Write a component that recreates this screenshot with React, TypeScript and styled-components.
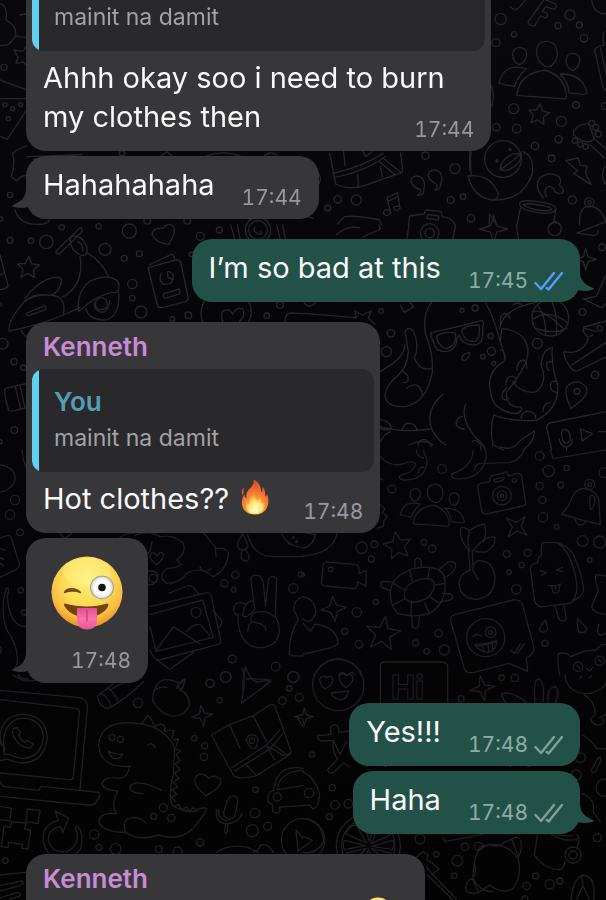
import React from 'react';
import styled, { createGlobalStyle, css } from 'styled-components';

const GlobalStyle = createGlobalStyle`
  * { box-sizing: border-box; }
  body {
    margin: 0;
    background: #050507;
    font-family: Inter, "Liberation Sans", sans-serif;
  }
`;

/* ---------- wallpaper ---------- */

type Tile = { x: number; y: number; dots: number[][]; paths: string[] };

const star = (cx: number, cy: number, outer: number, inner: number, points: number, turn = 0) => {
  const steps = Array.from({ length: points * 2 }, (_, i) => {
    const r = i % 2 ? inner : outer;
    const a = (Math.PI * i) / points - Math.PI / 2 + (turn * Math.PI) / 180;
    return `${(cx + r * Math.cos(a)).toFixed(1)} ${(cy + r * Math.sin(a)).toFixed(1)}`;
  });
  return `M${steps.join('L')}Z`;
};

const group = (dx: number, dy: number, s: number) => {
  const p = (x: number, y: number) => `${dx + x * s} ${dy + y * s}`;
  return [
    `M${p(0, 0)}Q${p(8, -62)} ${p(85, -72)}Q${p(148, -50)} ${p(148, 10)}Q${p(145, 16)} ${p(136, 14)}L${p(4, 5)}Q${p(-1, 4)} ${p(0, 0)}Z`,
    `M${p(88, -158)}C${p(130, -158)} ${p(128, -100)} ${p(104, -86)}Q${p(92, -78)} ${p(80, -86)}C${p(50, -105)} ${p(50, -158)} ${p(88, -158)}Z`,
    `M${p(8, -140)}C${p(42, -138)} ${p(30, -98)} ${p(8, -88)}C${p(-18, -94)} ${p(-22, -140)} ${p(8, -140)}Z`,
    `M${p(166, -122)}C${p(200, -122)} ${p(190, -80)} ${p(168, -70)}C${p(140, -80)} ${p(142, -122)} ${p(166, -122)}Z`,
    `M${p(28, -76)}Q${p(-40, -96)} ${p(-54, -32)}L${p(-8, -23)}Q${p(0, -50)} ${p(28, -76)}`,
    `M${p(130, -60)}Q${p(200, -60)} ${p(210, -2)}Q${p(208, 4)} ${p(156, -4)}Q${p(154, -34)} ${p(130, -60)}`,
  ];
};

const tiles: Tile[] = [
  {
    x: 0,
    y: 0,
    dots: [[12, 202, 9], [30, 585, 8], [2, 657, 6], [15, 314, 6], [38, 326, 6], [62, 314, 6], [25, 356, 6], [366, 460, 8], [562, 662, 10], [442, 662, 10]],
    paths: [
      'M0 10Q25 20 18 60Q55 80 45 110Q30 140 0 137M48 108L76 112M60 45L78 42',
      'M80 138L68 154L42 150L54 172L48 190L70 186L80 196',
      'M0 240L80 270M0 296H80M0 408L22 418L80 330',
      'M80 438L50 450L38 460Q46 490 34 530L50 542Q60 530 80 525M80 470L245 464L100 478',
      'M45 630Q60 680 130 672Q148 668 150 655M480 470L500 455L520 470M610 472Q670 445 730 472M790 470Q810 450 830 465',
    ],
  },
  {
    x: 303,
    y: 0,
    dots: [
      [593, 57, 17], [801, 45, 15], [765, 77, 9], [829, 75, 9], [633, 103, 8], [579, 128, 12], [843, 115, 11], [632, 326, 15], [819, 315, 10],
      [775, 364, 15], [641, 386, 13], [580, 382, 11], [696, 438, 11], [767, 418, 11], [746, 475, 10], [808, 600, 12], [480, 590, 8], [443, 600, 10],
      [160, 600, 15], [104, 598, 11], [74, 624, 9], [367, 467, 11], [456, 506, 15], [504, 655, 11], [905, 318, 10], [600, 477, 55], [582, 483, 3],
      [621, 448, 3], [859, 607, 14], [859, 607, 5], [866, 370, 9], [878, 382, 9], [886, 402, 9], [816, 422, 8], [832, 433, 8], [848, 440, 8],
    ],
    paths: [
      ...group(642, 282, 1),
      star(707, 344, 33, 16, 5, 8),
      'M622 20Q630 32 645 26L668 0M675 66L722 0M675 66Q680 82 696 76L712 48L728 54Q738 46 730 38L718 34L728 20L752 28Q764 22 758 12L728 0M866 0Q870 40 909 42',
      'M875 150Q880 138 909 134M875 150L900 262L909 272M892 142L909 220M903 95Q896 110 903 130',
      'M788 482L826 474L832 496L852 498L848 520L864 554L812 520L824 512Z',
      'M905 500Q890 530 909 554M812 392Q832 368 858 372L874 418Q850 438 812 405ZM875 418L909 446M862 434L904 474',
      'M504 455Q500 500 506 528M495 528Q560 520 586 580Q586 600 566 600Q510 590 495 528M566 600Q660 605 688 520Q695 470 660 455',
      'M592 510Q590 480 630 462L655 460Q656 495 610 512ZM594 508Q620 490 653 462',
      'M722 594Q690 560 712 532Q745 512 768 530Q778 545 768 555Q790 570 776 580Q755 582 752 566Q740 552 728 566Q722 580 732 590',
      'M362 568Q366 586 344 586Q364 570 340 564Q318 550 326 534Q346 520 360 538Q368 555 362 568M414 550Q414 570 396 570Q412 556 390 546Q370 532 378 516Q398 502 412 518Q420 535 414 550',
      'M244 632Q258 624 264 638Q256 650 246 645Q238 640 244 632M262 638L252 592L284 578L290 620M254 604L286 590M272 622Q288 614 292 624Q284 636 274 630Z',
      'M80 460L98 552Q130 570 180 558L296 518Q302 510 292 460M90 520Q180 500 240 460M96 532Q190 512 246 470M228 484L276 524M240 474L292 516M122 455L126 496M164 525L166 556M232 500L238 530M180 455L188 470L206 456',
      'M650 612Q650 598 700 604Q760 612 760 626Q755 645 706 638Q650 630 650 612ZM660 614Q680 606 740 622Q750 628 740 632Q690 634 660 614M652 625L642 675M758 632L752 668M740 675Q760 655 772 675',
      'M830 675Q826 620 858 618Q895 620 909 668M104 672L124 650Q160 645 230 660L236 675M316 675L320 648L364 642L368 630L414 634L418 650Q450 655 456 675M374 644L408 648L406 660L372 655ZM560 642L558 675M560 642L580 675',
      'M0 648Q18 650 32 655M40 516Q62 530 44 558M565 255Q576 290 566 320M500 450V510',
    ],
  },
  {
    x: 0,
    y: 225,
    dots: [
      [30, 46, 9], [93, 47, 8], [139, 51, 20], [185, 7, 8], [315, 73, 18], [388, 18, 21], [296, 4, 8], [373, 100, 9], [418, 86, 9], [601, 34, 12],
      [658, 15, 9], [574, 88, 7], [397, 177, 14], [397, 219, 8], [423, 261, 18], [517, 282, 7], [565, 271, 10], [840, 240, 10], [800, 272, 8],
      [8, 356, 16], [42, 410, 9], [70, 428, 8], [43, 615, 10], [304, 236, 18], [774, 15, 38], [774, 15, 28], [0, 238, 5], [0, 650, 6],
    ],
    paths: [
      star(85, 129, 35, 16, 5, 3),
      'M168 78Q166 88 178 87L246 20Q248 8 240 8L168 78M210 46Q212 28 232 34Q260 44 262 78Q258 96 242 90Q212 76 210 46ZM234 50Q250 60 248 78',
      'M262 84Q306 110 326 156M240 94Q254 180 188 216M76 220Q104 180 140 164Q190 146 184 174Q172 214 140 210Q100 204 76 228M28 318Q20 290 76 226Q120 202 172 214Q198 225 190 270Q120 300 28 318ZM80 264L134 242Q142 250 132 256L86 272Q78 272 80 264M190 270L240 248M236 260Q228 200 270 168Q320 146 350 166Q364 180 352 202Q300 200 236 260ZM256 250Q270 290 320 284Q360 270 356 205M282 232Q284 260 306 262Q326 258 330 226M64 316Q70 330 80 335',
      'M456 30Q458 6 488 10Q505 -10 520 4Q530 24 506 58Q470 55 456 30Z',
      'M444 128L472 240Q474 250 486 248L556 230Q566 226 564 216L542 112Q538 102 528 105ZM448 120L514 88Q522 88 526 105M484 144Q474 168 492 178Q522 180 520 152Q514 138 502 140M502 140L504 158L516 162M492 206L538 192Q544 206 534 208L494 220Q486 214 492 206Z',
      'M764 8Q758 22 778 28Q788 26 782 20M692 0L704 40M712 0L720 40M830 0L840 40M848 0L856 40',
      'M0 90L24 182Q20 192 0 194M0 152L14 142M16 490L78 476M16 490Q10 505 26 556Q30 562 78 548M46 484L62 552M60 482L74 545',
      'M612 230Q596 260 608 290M746 230Q762 260 746 290M668 290Q660 262 672 256Q690 250 698 268Q708 244 728 252Q738 270 718 290M856 290Q854 268 870 264L909 266',
    ],
  },
  {
    x: 303,
    y: 225,
    dots: [
      [380, 24, 28], [380, 24, 14], [755, 12, 20], [897, 67, 10], [838, 261, 10], [742, 278, 55], [703, 355, 15], [876, 450, 11], [822, 499, 9],
      [264, 325, 11], [250, 380, 15], [234, 258, 7], [516, 249, 9], [477, 256, 6], [563, 333, 8], [565, 379, 12], [540, 395, 7], [572, 415, 6], [20, 225, 18], [890, 310, 8],
    ],
    paths: [
      star(848, 103, 32, 10, 4), star(572, 12, 42, 13, 4),
      'M100 30Q130 0 170 8M180 36L232 12L228 0M312 40L318 0M450 40L458 0M640 0L646 40M822 24L909 -10M822 24L870 32Q885 30 886 18',
      'M842 222L880 214L909 150M842 222L895 248L909 235M0 265L160 278L156 258L178 270L204 258L196 280L216 298M292 240L304 262L332 246L322 234',
      'M388 230Q360 260 366 320Q392 390 388 440Q372 530 310 544Q250 550 246 512Q250 480 286 450Q312 430 316 380L306 320Q316 300 332 320Q350 360 334 400Q350 440 384 430M232 440L270 415Q304 390 306 360',
      'M384 334L384 322Q450 310 536 286Q544 292 540 304L538 340Q534 358 514 360Q476 360 468 330L462 340Q460 378 428 380Q396 380 392 352ZM400 334Q430 315 458 326Q460 368 426 370Q404 360 400 334ZM476 320Q480 300 528 300Q534 340 516 350Q486 352 476 320Z',
      'M476 400Q480 384 500 382Q500 400 486 406Q476 406 476 400M548 234Q570 270 592 350Q610 400 602 410Q550 440 562 500Q570 560 640 566Q660 560 654 546Q610 550 610 500Q640 470 670 410Q692 330 610 312L596 312L592 350M700 232Q600 250 590 310M628 470Q660 510 700 500Q736 470 714 420Q720 370 748 368Q744 420 764 480Q770 550 700 586Q620 590 572 570',
      'M300 440Q320 450 314 468Q308 475 300 472M310 490Q350 462 358 510M610 490Q595 500 598 520Q610 530 616 520M642 435Q642 410 660 405Q672 408 672 430M608 478Q610 450 634 455Q644 470 634 478M654 580Q656 556 680 560Q700 565 698 580M720 560Q720 535 742 532M762 502Q740 500 742 475Q750 465 758 470M738 436Q728 430 732 412L748 410M592 374Q608 380 606 404M592 294Q590 270 605 265Q620 268 620 280M630 240Q640 230 656 238',
      'M420 508Q360 560 390 620Q410 652 430 660M488 538Q470 580 520 640Q540 655 546 672M478 574Q458 578 460 600Q470 612 484 612M508 650Q520 640 534 660V675M572 570Q560 610 570 660L600 675M590 665Q630 680 650 648L694 618Q696 650 660 675M232 584Q260 586 266 612Q250 618 232 610M298 612Q304 590 326 596Q342 604 342 618M232 605Q300 625 382 612M232 650Q240 630 262 620M318 660Q360 640 390 660M346 660Q348 640 370 645Q384 652 384 665',
      'M690 282Q745 250 796 296M705 240Q730 280 728 330M745 225Q765 270 760 330M700 310Q750 330 792 310M690 260Q720 250 780 310',
      'M784 380Q780 392 800 424Q812 440 822 438L909 396M784 380Q840 390 856 340L840 318L843 306L909 288M806 420L909 352M858 334L870 330M843 310L880 320',
      'M804 550Q780 500 794 482Q822 458 848 484Q866 508 804 550Z',
      'M909 560L740 594Q728 600 732 612L746 675M776 622Q778 610 790 614Q800 618 802 640Q800 656 786 654Q776 650 776 622M768 640Q774 668 792 666Q808 660 808 644M791 667V675M832 612L868 626L838 648ZM888 620H909',
    ],
  },
  {
    x: 0,
    y: 450,
    dots: [
      [45, 150, 14], [30, 194, 14], [60, 247, 10], [62, 421, 8], [72, 487, 8], [460, 385, 12], [588, 487, 15], [673, 400, 11], [706, 375, 11],
      [701, 419, 7], [880, 415, 14], [902, 374, 8], [697, 627, 12], [677, 681, 16], [630, 700, 12], [827, 650, 13], [880, 681, 16], [867, 715, 8],
      [868, 280, 3], [890, 275, 3], [880, 262, 3],
    ],
    paths: [
      'M0 45Q46 50 46 90Q30 125 0 126M66 0L70 30L78 50M0 264L24 256Q34 256 36 270L58 340Q60 350 50 358L0 382M0 296L14 300M0 324L12 328M0 340L10 346',
      'M20 415Q30 408 22 440Q28 530 78 530M20 415Q-2 470 20 540Q50 580 52 620Q54 650 40 660M40 675Q70 700 110 690M0 590Q8 600 0 610',
      'M180 250Q190 268 200 262L214 250M350 275Q370 245 400 250M405 255Q450 240 480 260Q520 252 550 280Q560 310 530 330Q560 350 500 356Q470 380 500 400Q540 400 560 370Q600 345 640 380Q680 360 686 310Q680 290 650 296L610 248M646 296L648 320M635 355Q610 375 600 350M440 345Q430 310 450 305L456 276',
      'M450 318Q450 305 464 310L472 318Q480 300 490 312Q490 330 470 344Q450 330 450 318ZM430 365Q470 355 474 380Q470 408 440 404',
      'M728 250L712 280Q712 300 728 300Q750 295 742 280ZM728 298Q714 330 740 334Q756 320 738 302M742 252Q760 320 820 320H909M845 250Q860 290 909 292',
      'M450 470L620 428Q630 426 634 440L662 570Q664 582 652 584L478 630Q460 628 450 600M450 494L608 450L640 562L468 604L450 530M470 600L520 530L600 582M560 545Q580 520 600 524L630 556M506 430L560 408Q570 404 580 412L596 432M640 482L664 510Q670 520 656 534M470 630L510 658L580 608',
      'M764 476L752 386Q758 370 780 378L790 396L796 462M796 470L806 386Q816 374 830 386L826 500Q850 540 826 576Q790 604 750 586Q712 562 714 492M764 480L740 500Q726 502 728 490L736 466Q750 446 762 456M734 462Q712 450 702 470Q698 490 716 498M758 492Q750 500 754 514Q780 520 790 526Q800 530 796 540M754 514Q742 530 744 545M758 490Q800 476 822 500M909 440Q880 450 882 480L896 510Q870 540 868 610Q870 620 909 618',
      'M736 650Q728 690 728 720M736 650Q750 690 770 696L812 690L780 720M530 715Q540 690 556 688Q552 710 540 720M330 720Q360 700 400 690M464 720Q480 708 500 712',
    ],
  },
  {
    x: 303,
    y: 450,
    dots: [
      [710, 18, 13], [737, 63, 17], [791, 54, 8], [710, 108, 11], [773, 105, 9], [718, 150, 11], [720, 202, 14], [761, 231, 7], [417, 57, 13],
      [267, 117, 12], [597, 137, 28], [597, 137, 14], [597, 137, 5], [634, 91, 6], [176, 293, 17], [214, 283, 10], [205, 327, 9], [363, 277, 9],
      [388, 296, 11], [611, 312, 10], [674, 308, 11], [656, 345, 8], [618, 367, 7], [640, 418, 14], [839, 273, 16], [890, 276, 18], [860, 330, 7],
      [903, 68, 15], [83, 358, 7], [161, 487, 14], [218, 456, 8], [125, 544, 9], [168, 583, 11], [338, 579, 9], [371, 604, 8], [424, 600, 15],
      [407, 550, 11], [726, 580, 9], [548, 563, 57], [563, 547, 16], [563, 547, 6], [860, 103, 15], [860, 103, 6], [825, 650, 14], [890, 632, 14], [0, 374, 5],
    ],
    paths: [
      ...group(331, 218, 0.73),
      star(284, 288, 43, 20, 5, -10), star(240, 552, 54, 22, 5, 8), star(641, 230, 40, 13, 4, 40),
      star(92, 476, 38, 14, 4, -6),
      'M232 20Q260 52 300 42Q334 28 338 44Q330 70 292 76Q284 86 300 90Q370 92 372 30L360 0M340 0Q342 22 362 24M345 70Q346 50 362 52M510 0Q510 50 446 72Q440 90 480 86Q540 80 550 20L548 0M515 60Q515 40 535 40M540 40L620 38Q650 30 664 0M742 0L750 26L909 0M232 85L240 90',
      'M524 114Q522 104 532 100L560 94L564 78L612 66L616 78L644 70Q654 70 656 80L668 158Q668 166 660 168L550 192Q540 192 536 182ZM572 90Q588 82 604 84Q606 92 576 96Z',
      'M775 192Q796 176 808 140Q824 108 856 118Q890 130 888 160L892 224Q830 210 775 192ZM862 138Q874 130 876 150Q874 176 862 178Q858 160 862 138M816 208Q826 236 846 218',
      'M500 304Q468 270 472 236Q478 226 500 242Q520 226 544 222Q554 250 540 276Q556 256 576 262Q578 290 548 306Q520 308 512 300M500 244Q490 270 500 300M512 300Q530 280 540 270M496 300L502 360M508 300L510 362M502 360Q470 370 468 400Q472 446 522 448Q576 440 576 380Q568 330 526 332Q506 340 510 362L526 390',
      'M60 346Q64 334 76 336L160 344Q170 346 168 370L190 362L188 408L164 396Q162 414 156 416L64 408Q54 406 56 396Z',
      'M262 430Q262 380 330 356Q400 342 422 374Q440 450 384 488Q340 506 284 490Q262 470 262 430ZM304 440Q300 414 330 396Q376 376 392 394Q400 420 370 446Q320 470 304 440M270 400L304 420M320 360L328 396M380 354L374 386M424 400L392 406M410 460L380 440M364 458L380 490M325 460L324 496M268 466L306 446M336 356L336 330Q346 316 354 332L356 352M406 360L436 336Q460 330 458 350Q450 372 422 384M264 396L238 394Q226 402 240 414L262 422M418 430L442 432Q456 442 442 450L412 456M326 498L328 530Q340 540 346 528L350 498M442 346L446 352',
      'M718 278Q712 300 716 316Q702 320 704 338Q684 340 682 356L694 450Q700 472 720 470L800 460Q830 440 818 380Q800 300 762 278ZM762 278Q800 290 812 316Q840 380 842 420Q836 440 820 446M800 460L822 446M712 362L730 368L716 376M778 352L760 360L778 364M736 406Q756 410 774 402M746 410L750 426Q760 434 768 424L770 406M758 408V420M756 466L768 508Q780 520 790 506L782 462',
      'M728 510Q706 530 710 542Q724 552 734 538ZM824 506Q820 530 828 546Q846 552 852 536ZM888 522Q878 546 892 556L909 550M909 378L880 374Q872 382 886 420L866 470Q870 490 909 494',
      'M442 510Q442 498 456 494L630 450Q650 448 658 462L692 590Q696 610 670 624L674 664L618 640L510 668Q490 670 484 656ZM510 560Q516 548 536 558M516 584Q548 582 582 572Q580 600 556 608Q526 604 516 584M520 590L582 576M538 584L542 600M554 582L558 606M568 578L568 596M624 602L636 610L652 582M644 610L664 580',
      'M770 675Q760 620 768 610Q790 606 804 620Q840 600 880 600Q896 580 909 584M820 646L830 654M886 628L894 636M850 655L860 664L870 652',
      'M0 440Q40 450 38 490Q30 512 18 515Q0 512 0 505M0 520L22 545L36 522Q100 530 106 580Q100 592 0 612M34 675Q60 625 110 626Q160 635 174 675M108 675Q114 660 130 675M136 675Q146 660 156 675M232 675V650Q232 636 246 636H416Q432 636 434 650V675M0 248Q20 250 38 255M0 294Q30 290 38 250M0 318Q90 310 102 250M232 165L246 176L238 188L254 200L242 212V228L225 234',
    ],
  },
  {
    x: 0,
    y: 675,
    dots: [
      [414, 84, 14], [630, 25, 12], [677, 6, 16], [659, 76, 8], [583, 190, 8], [614, 212, 9], [612, 246, 11], [336, 187, 9], [361, 193, 9],
      [756, 197, 8], [766, 344, 8], [765, 414, 14], [757, 467, 18], [803, 454, 12], [283, 478, 14], [297, 517, 9], [347, 522, 16], [461, 424, 9],
      [490, 398, 12], [514, 429, 11], [600, 502, 11], [476, 522, 10], [533, 530, 14], [16, 557, 8], [832, 366, 12], [847, 77, 11], [898, 67, 12],
      [880, 6, 17], [868, 40, 8], [909, 495, 65],
    ],
    paths: [
      'M0 46L240 68Q264 74 262 100L240 344M0 74L228 100Q240 102 238 114L220 306Q218 316 206 314L0 294M0 320L10 334L116 346L124 334L296 352Q306 360 286 384Q280 392 262 390L0 364',
      'M0 210Q-8 130 60 118Q136 116 142 188Q134 262 66 264Q40 262 20 252L0 258M12 234Q6 190 20 160Q40 126 80 130Q130 140 130 190Q122 246 70 250Q44 248 30 238L12 238L14 218Q0 210 0 180M40 160Q34 176 44 190Q60 218 90 220L100 208L82 196L72 202Q60 192 56 180L62 172L50 158Z',
      'M292 64L360 10M292 64Q300 100 326 100Q380 70 430 20M302 54Q326 66 334 96M322 38Q346 54 354 80',
      'M540 44Q570 60 568 90Q556 122 520 124Q480 118 458 76Q460 20 496 14Q520 14 540 26L554 12Q552 40 540 44ZM532 30L540 44',
      star(607, 122, 32, 10, 4, -8),
      'M726 -20Q740 10 724 84L812 20Q810 10 740 12M884 125L909 118M890 125L909 155',
      'M634 180L700 300Q712 316 770 302L870 238Q876 230 870 220L826 96Q820 84 806 92L760 122L690 148ZM696 278L800 210L840 164M704 288L810 222L848 176M804 214L850 242L872 236M816 206L858 238M690 152L720 220M760 124L800 200M740 270L768 300M800 216L824 254M756 220Q730 196 746 182Q766 174 774 192Q774 208 766 220Z',
      'M390 274Q380 310 360 310Q310 304 306 326Q310 346 354 348Q330 390 350 416Q300 410 296 440Q310 472 376 472Q420 500 476 480Q540 500 580 460Q620 410 620 400Q600 396 584 410Q540 410 516 390Q504 360 520 300L524 220Q500 160 420 146Q300 130 296 210Q300 280 390 274ZM326 230Q346 240 368 238Q360 254 340 250Q328 242 326 230M444 210Q456 200 466 218M430 356Q390 356 390 334Q410 308 484 346M376 470Q364 430 400 428Q424 428 438 444M424 146L444 122Q458 130 462 156M466 156Q480 140 494 152V168M496 170Q510 164 522 166L516 190M520 195L536 192L528 214M524 220L542 228L528 240L540 256L526 268L540 284L524 294L536 310L520 322L534 336L516 344L530 358L514 366L526 380M524 394L536 388L544 404L560 396L568 408L580 398L590 408',
      'M584 314Q590 294 608 298Q620 300 626 310Q646 296 662 314Q668 334 618 362Q582 334 584 314Z',
      'M680 380Q690 358 706 364Q716 372 712 390L704 424Q694 438 680 430Q668 420 672 410ZM650 404Q644 444 680 446Q716 444 726 416M656 404Q652 430 680 438M684 448L680 474Q676 480 674 470L676 448',
      'M909 280Q850 270 830 310L820 346Q800 350 804 380L818 390V408Q828 420 840 408L838 396L909 392M832 344Q836 290 909 286M832 344L909 332M888 465L909 490M888 465L894 528L909 515',
      'M0 394L34 400L30 438L0 434M82 402L120 406L114 446L78 440ZM34 440L78 444L74 462L92 466L84 522L66 520L68 508L26 502L24 518L4 514L12 454L32 456Z',
      'M166 408L206 430L188 472L180 454Q140 464 146 500Q156 534 200 530Q240 510 230 470Q222 450 234 454Q254 480 242 520Q230 540 210 545M166 408L174 436Q124 450 130 500Q140 540 165 545',
      'M0 600L76 592M0 632L66 618Q74 626 60 632L0 648M0 668L52 652Q66 656 58 664L30 672M650 532Q680 510 724 514Q750 516 774 532M760 530Q776 530 780 512Q800 500 820 532M54 0Q66 14 86 12M90 0L100 10',
    ],
  },
  {
    x: 303,
    y: 675,
    dots: [
      [106, 30, 77], [474, 71, 9], [596, 8, 8], [635, 9, 11], [27, 239, 8], [88, 338, 9], [96, 390, 13], [136, 386, 13], [79, 425, 9], [18, 354, 14],
      [196, 512, 96], [196, 512, 80], [351, 492, 15], [400, 538, 8], [463, 557, 16], [486, 515, 11], [527, 514, 12], [454, 602, 8], [671, 633, 11],
      [698, 603, 9], [740, 628, 14], [771, 618, 9], [883, 488, 12], [810, 540, 24], [810, 540, 12], [905, 338, 26], [832, 248, 15], [820, 300, 15], [666, 672, 9],
    ],
    paths: [
      'M50 12Q56 -2 72 8Q84 -4 90 14Q90 30 66 42Q50 30 50 12ZM108 4Q116 -10 130 2Q144 -8 150 8Q150 24 128 38Q110 24 108 4ZM84 54L136 48Q134 72 112 74Q90 70 84 54',
      star(538, 40, 38, 12, 4, -10), star(4, 125, 26, 8, 4),
      'M232 0V85M434 0V85M596 58Q620 44 668 80L660 95H620Q600 75 596 58M696 82Q690 10 708 12Q726 20 720 80M736 82Q730 40 756 34Q774 50 756 84M786 0Q790 56 860 56Q909 40 909 20M830 10L836 4M860 8L866 2M842 58Q880 80 876 120Q850 134 880 150Q909 150 900 130M890 128L909 118M840 180Q870 200 880 220L909 222M884 250Q896 240 892 260L878 290Q864 296 866 284Z',
      'M0 290Q40 310 50 360Q46 400 30 402L18 390L0 392M0 430Q60 440 62 500Q40 540 0 532M0 484L28 496L0 518M190 275Q210 260 250 275M620 275Q640 260 680 275M836 355Q880 370 870 410L892 440',
      'M44 182Q50 178 58 182L84 178L82 158Q94 142 106 156L108 172L140 168M44 182Q44 196 56 198L90 196Q88 232 104 252L74 284Q78 300 92 292L122 264L140 276M90 196L112 238L130 200',
      'M190 504L128 476Q140 450 160 450ZM200 500L180 440Q195 435 216 440ZM204 506L230 450Q250 456 262 480ZM206 514L270 496Q276 510 268 524ZM188 512L124 496Q118 510 124 524ZM190 520L130 534Q140 552 150 560ZM204 520L264 534L250 555ZM196 522L185 560H208Z',
      'M360 530L342 545M360 530L376 540L370 555L386 562L394 570L408 582L388 598L370 575M372 600L450 675M388 598L460 672M424 500L540 478M420 486L426 500',
      'M524 530Q530 500 580 514L630 490Q650 480 654 500Q658 530 644 548Q660 600 630 640Q600 660 560 630L524 654Q486 660 488 636Q490 614 510 610Q510 560 524 530ZM524 530Q560 490 620 524Q640 540 644 550M510 610Q530 650 570 650M512 604Q520 600 516 570M626 494L646 544M508 612L526 650',
      'M704 476L694 540Q720 580 770 584Q784 580 786 560M740 475Q780 500 820 494Q832 488 822 478M752 475Q790 488 810 480M830 490L822 520M804 675Q810 610 840 600Q880 604 872 675M820 675Q826 660 840 632L860 675M836 604L840 632',
    ],
  },
];

const WallpaperSvg = styled.svg`
  position: fixed;
  inset: 0;
  width: 100%;
  height: 100%;
  z-index: 0;
`;

const Wallpaper = () => (
  <WallpaperSvg viewBox="0 0 606 900" preserveAspectRatio="xMidYMin slice" aria-hidden="true">
    <defs>
      <linearGradient id="night" x1="0" y1="0" x2="0" y2="1">
        <stop offset="0" stopColor="#09090c" />
        <stop offset="0.5" stopColor="#050507" />
        <stop offset="1" stopColor="#030304" />
      </linearGradient>
    </defs>
    <rect width="606" height="900" fill="url(#night)" />
    {tiles.map((tile) => (
      <g
        key={`${tile.x}-${tile.y}`}
        transform={`translate(${tile.x} ${tile.y}) scale(0.33333)`}
        fill="none"
        stroke={tile.y < 450 ? '#262629' : '#1f1f21'}
        strokeWidth="4"
        strokeLinejoin="round"
        strokeLinecap="round"
      >
        {tile.dots.map(([cx, cy, r], i) => (
          <circle key={i} cx={cx} cy={cy} r={r} />
        ))}
        {tile.paths.map((d, i) => (
          <path key={i} d={d} />
        ))}
      </g>
    ))}
    <text x="391" y="699" fontFamily="Inter" fontWeight="800" fontSize="32" fill="none" stroke="#1f1f21">
      Hi
    </text>
  </WallpaperSvg>
);

/* ---------- small drawings ---------- */

const Ticks = styled.svg<{ $read?: boolean }>`
  width: 29px;
  height: 20px;
  margin-left: 6px;
  fill: none;
  stroke: ${(p) => (p.$read ? '#559df5' : '#7fa096')};
  stroke-width: 2.4;
  stroke-linecap: round;
  stroke-linejoin: round;
`;

const ReadTicks = ({ read }: { read?: boolean }) => (
  <Ticks $read={read} viewBox="0 0 29 20" role="img" aria-label={read ? 'Read' : 'Delivered'}>
    <path d="M1.5 12L7 18L20 2M12.7 17L14.6 18.4L28 2" />
  </Ticks>
);

const FlameSvg = styled.svg`
  width: 30px;
  height: 36px;
  margin: 0 6px 0 3px;
  vertical-align: -6px;
`;

const Flame = () => (
  <FlameSvg viewBox="0 0 30 36" role="img" aria-label="fire">
    <defs>
      <radialGradient id="flameOuter" cx="0.5" cy="0.88" r="0.85">
        <stop offset="0" stopColor="#ffd95a" />
        <stop offset="0.35" stopColor="#fba03a" />
        <stop offset="0.75" stopColor="#ee6230" />
        <stop offset="1" stopColor="#dc4a2a" />
      </radialGradient>
      <radialGradient id="flameInner" cx="0.5" cy="0.8" r="0.7">
        <stop offset="0" stopColor="#fffbd0" />
        <stop offset="0.5" stopColor="#ffe777" />
        <stop offset="1" stopColor="#fba83c" stopOpacity="0.4" />
      </radialGradient>
    </defs>
    <path
      fill="url(#flameOuter)"
      d="M13.5 0.5C18 2.5 21.5 7 21.2 13.2C22.6 12.6 22.9 9.5 22.6 7.8C25.2 10 25.2 14.2 25.4 17.6C26.8 17.2 27 15.6 27 14.8C29.6 20 30 35.4 15 35.6C0.6 35.4-.2 22 4.4 15.6C4.8 17.6 5.4 18.8 6.6 19.2C5.4 13.4 8.6 10.8 11.4 7.8C13.6 5.4 14 3 13.5 0.5Z"
    />
    <path fill="#e45b31" d="M4.2 8C1.6 10.6 1.2 13.8 2.8 16.4C4.4 14 2.8 11.6 4.2 8Z" />
    <path
      fill="url(#flameInner)"
      d="M13.6 13C15.6 15.6 14.8 18.8 17.6 21.4C19.2 20.8 19.4 18.6 19.2 17.2C21.6 19.6 21 22.6 22.4 24.4C23.6 24 23.8 22.6 23.8 22C26 28 23 34.6 15 34.8C7 34.6 4.6 28.4 6.8 23C7.4 24.4 8 25 9 25C8.4 19.6 13.6 18 13.6 13Z"
    />
  </FlameSvg>
);

const FaceSvg = styled.svg<{ $inline?: boolean }>`
  display: block;
  width: ${(p) => (p.$inline ? '30px' : '72px')};
  height: ${(p) => (p.$inline ? '32px' : '76px')};
`;

const WinkFace = ({ id, inline }: { id: string; inline?: boolean }) => (
  <FaceSvg $inline={inline} viewBox="0 0 72 76" role="img" aria-label="winking face with tongue">
    <defs>
      <radialGradient id={`${id}Skin`} cx="0.5" cy="0.34" r="0.68">
        <stop offset="0" stopColor="#fff07a" />
        <stop offset="0.5" stopColor="#fddb57" />
        <stop offset="0.78" stopColor="#f9bc3f" />
        <stop offset="1" stopColor="#e58a22" />
      </radialGradient>
      <radialGradient id={`${id}Eye`}>
        <stop offset="0.65" stopColor="#ffffff" />
        <stop offset="0.88" stopColor="#d9dcdf" />
        <stop offset="1" stopColor="#868178" />
      </radialGradient>
      <linearGradient id={`${id}Tongue`} x1="0" y1="0" x2="0" y2="1">
        <stop offset="0" stopColor="#e0508c" />
        <stop offset="0.5" stopColor="#f973ab" />
        <stop offset="1" stopColor="#ea5794" />
      </linearGradient>
    </defs>
    <circle cx="36" cy="36" r="35.5" fill={`url(#${id}Skin)`} />
    <ellipse cx="36" cy="16" rx="24" ry="14" fill="#fff79c" opacity="0.35" />
    <path d="M13.5 36.5C15.5 31.5 25 31.5 29.5 36.5C24 34.6 18.5 34.6 13.5 36.5Z" fill="#7a4a12" stroke="#7a4a12" strokeWidth="1.4" strokeLinejoin="round" />
    <circle cx="51" cy="31.5" r="11.8" fill={`url(#${id}Eye)`} />
    <circle cx="51" cy="31.5" r="3.8" fill="#151414" />
    <path d="M13.8 47.6C28 51.5 44 51.5 56 47.6C57.6 47.6 57.6 49.4 56.8 51C48 65 22 65 13.4 50C12.8 48.6 13 47.6 13.8 47.6Z" fill="#754211" />
    <path d="M26 52H46V64C46 70 42.6 73.4 36 73.4C29.4 73.4 26 70 26 64Z" fill={`url(#${id}Tongue)`} />
    <path d="M36 54V65" stroke="#ce3f7c" strokeWidth="1.4" strokeLinecap="round" />
  </FaceSvg>
);

/* ---------- conversation ---------- */

const Chat = styled.main`
  position: relative;
  z-index: 1;
  height: 100vh;
  overflow: hidden;
  padding: 0 26px;
`;

const Thread = styled.ol`
  list-style: none;
  margin: 0;
  padding: 0;
  display: flex;
  flex-direction: column;
  gap: 20px;
`;

const Turn = styled.li<{ $mine?: boolean }>`
  display: flex;
  flex-direction: column;
  align-items: ${(p) => (p.$mine ? 'flex-end' : 'flex-start')};
  gap: 5px;
`;

const Bubble = styled.article<{ $mine?: boolean; $continued?: boolean; $wide?: boolean }>`
  position: relative;
  max-width: 84%;
  ${(p) => p.$wide && css`width: 72%;`}
  border-radius: ${(p) => (p.$continued ? '0 0 20px 20px' : '20px')};
  background: ${(p) => (p.$mine ? '#225147' : '#373739')};
`;

const TailSvg = styled.svg<{ $mine?: boolean }>`
  position: absolute;
  bottom: 6px;
  width: 28px;
  height: 24px;
  ${(p) =>
    p.$mine
      ? css`right: -14px; transform: scaleX(-1); fill: #225147;`
      : css`left: -14px; fill: #373739;`}
`;

const Tail = ({ mine }: { mine?: boolean }) => (
  <TailSvg $mine={mine} viewBox="0 0 28 24" aria-hidden="true">
    <path d="M14 0C14 8 9 13 1 16C-.2 17 .4 17.6 2 18C8 19.6 14 19 18 17.6L28 16V0Z" />
  </TailSvg>
);

const Sender = styled.h2`
  margin: 0;
  padding: 9px 17px 6px;
  font-size: 26px;
  line-height: 32px;
  font-weight: 600;
  color: #c98bd6;
`;

const Quote = styled.blockquote<{ $continued?: boolean }>`
  margin: 0 6px;
  padding: ${(p) => (p.$continued ? '0' : '17px')} 16px 16px 22px;
  border-radius: ${(p) => (p.$continued ? '0 0 12px 12px' : '12px')};
  background: linear-gradient(to right, #63d0f1 7px, #29292b 7px);
  font-size: 23px;
  line-height: 35px;
  color: #a2a2a7;
`;

const QuoteAuthor = styled.cite`
  display: block;
  margin-bottom: 3px;
  font-style: normal;
  font-size: 26px;
  line-height: 32px;
  font-weight: 600;
  color: #509fb3;
`;

const QuoteText = styled.p`
  margin: 0;
`;

const Body = styled.div<{ $quoted?: boolean }>`
  display: flex;
  justify-content: space-between;
  align-items: flex-end;
  gap: 27px;
  padding: ${(p) => (p.$quoted ? '7px' : '9px')} 17px 10px;
`;

const Text = styled.p`
  margin: 0;
  padding-bottom: 5px;
  font-size: 29px;
  line-height: 39px;
  color: #fafafa;
`;

const Meta = styled.div<{ $mine?: boolean }>`
  display: flex;
  align-items: center;
  flex: none;
  font-size: 21px;
  line-height: 22px;
  font-variant-numeric: tabular-nums;
  color: ${(p) => (p.$mine ? '#8dada4' : '#98989d')};
`;

const LongText = styled(Text)`
  display: flow-root;
  margin: 7px 17px 10px;
  padding: 0;
`;

const FloatingTime = styled.time`
  float: right;
  margin: 22px 0 0 27px;
  font-size: 21px;
  line-height: 22px;
  font-variant-numeric: tabular-nums;
  color: #98989d;
`;

const StickerBody = styled.div`
  display: flex;
  flex-direction: column;
  align-items: flex-end;
  gap: 18px;
  padding: 18px 17px 11px;
`;

const Sticker = styled.div`
  padding: 0 8px;
`;

const ClippedRow = styled.div`
  display: flex;
  justify-content: flex-end;
  margin-top: -4px;
  padding: 0 32px 10px;
`;

type NoteProps = { text: string; time: string; mine?: boolean; read?: boolean; tail?: boolean };

const Note = ({ text, time, mine, read, tail }: NoteProps) => (
  <Bubble $mine={mine}>
    {tail && <Tail mine={mine} />}
    <Body>
      <Text>{text}</Text>
      <Meta $mine={mine}>
        <time>{time}</time>
        {mine && <ReadTicks read={read} />}
      </Meta>
    </Body>
  </Bubble>
);

export default function App() {
  return (
    <>
      <GlobalStyle />
      <Wallpaper />
      <Chat>
        <Thread>
          <Turn>
            <Bubble $continued>
              <Quote $continued>
                <QuoteText>mainit na damit</QuoteText>
              </Quote>
              <LongText>
                <span>Ahhh okay soo i need to burn my clothes then</span>
                <FloatingTime>17:44</FloatingTime>
              </LongText>
              </Bubble>
            <Note text="Hahahahaha" time="17:44" tail />
          </Turn>
          <Turn $mine>
            <Note text="I’m so bad at this" time="17:45" mine read tail />
          </Turn>
          <Turn>
            <Bubble>
              <Sender>Kenneth</Sender>
              <Quote>
                <QuoteAuthor>You</QuoteAuthor>
                <QuoteText>mainit na damit</QuoteText>
              </Quote>
              <Body $quoted>
                <Text>
                  Hot clothes?? <Flame />
                </Text>
                <Meta>
                  <time>17:48</time>
                </Meta>
              </Body>
            </Bubble>
            <Bubble>
              <Tail />
              <StickerBody>
                <Sticker>
                  <WinkFace id="wink" />
                </Sticker>
                <Meta>
                  <time>17:48</time>
                </Meta>
              </StickerBody>
            </Bubble>
          </Turn>
          <Turn $mine>
            <Note text="Yes!!!" time="17:48" mine />
            <Note text="Haha" time="17:48" mine tail />
          </Turn>
          <Turn>
            <Bubble $wide>
              <Sender>Kenneth</Sender>
              <ClippedRow>
                <WinkFace id="next" inline />
              </ClippedRow>
            </Bubble>
          </Turn>
        </Thread>
      </Chat>
    </>
  );
}
